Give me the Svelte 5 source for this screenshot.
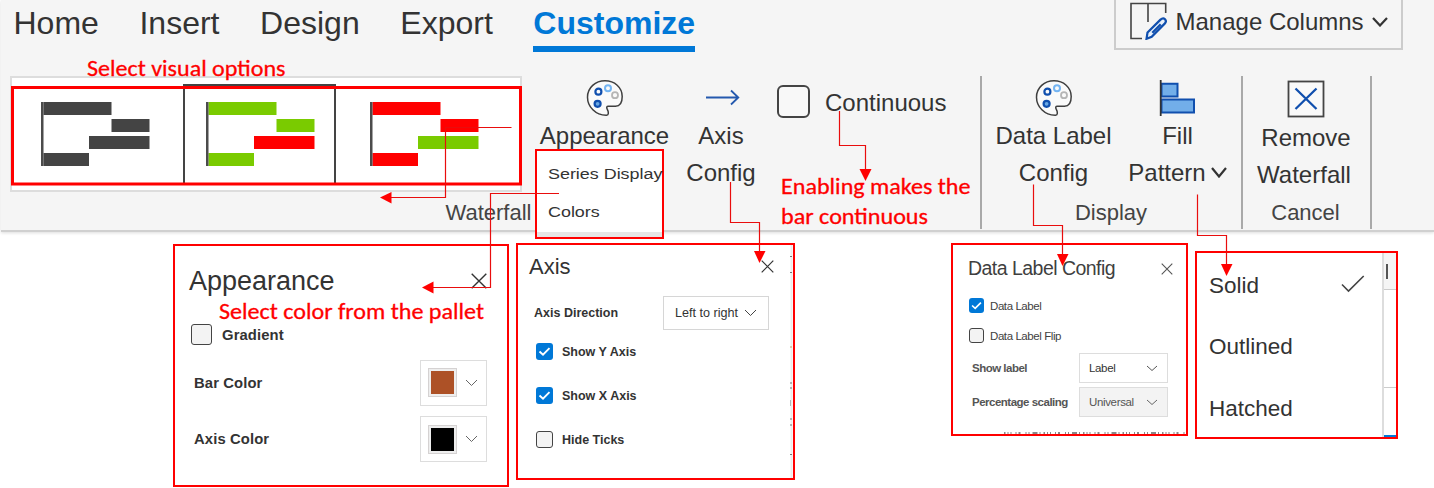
<script>
  const tabs = ['Home', 'Insert', 'Design', 'Export', 'Customize'];
  const G = '#7acb00', R = '#ff0000', K = '#444444';
  const tiles = [
    [K, K, K, K],
    [G, G, R, G],
    [R, R, G, R]
  ];
  const bars = [
    [2.5, 0, 68],
    [70.5, 17, 38],
    [48, 34, 60.5],
    [2.5, 51, 45.5]
  ];
  const connectors = [
    { line: 'M511.5 127.5H445.5V197.5H390', head: '380,197.5 391.5,192 391.5,203.5' },
    { line: 'M559 193.5H490.5V287.5H432', head: '422,287.5 433.5,281.5 433.5,293.5' },
    { line: 'M730.5 182V222.5H759.5V253', head: '759.5,263 754,251 765.5,251' },
    { line: 'M839.5 111V145.5H865.5V171', head: '865.5,181 859.5,169 871.5,169' },
    { line: 'M1033.5 184.5V225.5H1062.5V256', head: '1062.5,266 1057,254 1068.5,254' },
    { line: 'M1197.5 194.5V235.5H1226.5V266', head: '1226.5,276 1221,264 1232.5,264' }
  ];
</script>

{#snippet palette()}
  <svg class="ico" width="38" height="38" viewBox="0 0 38 38" fill="none">
    <path d="M20.5 36.2C9.500 36.400 1.500 27.500 1.500 18.200C1.500 8.500 9.500 1.800 19 1.800S36.200 8.300 36.200 17.500C36.200 23.500 34 27.200 29.500 27.200H22.300C20.700 27.200 20.300 28.600 21.200 30.200C22.800 33 22.900 36.100 20.500 36.200Z" fill="#fafafa" stroke="#3f3f3f" stroke-width="1.5"/>
    <circle cx="12.400" cy="12.700" r="3" stroke="#104fae" stroke-width="2.200"/>
    <circle cx="22" cy="9.200" r="3" stroke="#75b5f2" stroke-width="2"/>
    <circle cx="29" cy="16.200" r="3" stroke="#b5b5b5" stroke-width="1.800"/>
    <circle cx="11.600" cy="24.800" r="3" fill="#69a8e4" stroke="#104fae" stroke-width="2.200"/>
  </svg>
{/snippet}

{#snippet chevron(w, h, s, c)}
  <svg class="chev" width={w} height={h} viewBox="0 0 {w} {h}" fill="none" stroke={c} stroke-width={s}>
    <path d="M1 1L{w / 2} {h - 1.5}L{w - 1} 1"/>
  </svg>
{/snippet}

{#snippet cross(n, s, c)}
  <svg class="cross" width={n} height={n} viewBox="0 0 {n} {n}" stroke={c} stroke-width={s}>
    <path d="M.7 .7L{n - 0.7} {n - 0.7}M{n - 0.7} .7L.7 {n - 0.7}"/>
  </svg>
{/snippet}

{#snippet check(on, n)}
  <span class="check" class:on style:width="{n}px" style:height="{n}px">
    {#if on}
      <svg width={n} height={n} viewBox="0 0 17 17" fill="none" stroke="#fff" stroke-width="1.900"><path d="M3.500 8.500L7 11.700L13.500 5.200"/></svg>
    {/if}
  </span>
{/snippet}

<div class="page">
  <section class="ribbon">
    <header>
      <nav>
        {#each tabs as t}
          <span class="tab" class:active={t === 'Customize'}>{t}</span>
        {/each}
      </nav>
      <div class="manage">
        <svg width="38" height="38" viewBox="0 0 38 38" fill="none" stroke="#444" stroke-width="1.600">
          <path d="M13 36.500H2V1.500H36.700V11M19 1.500V20"/>
          <path d="M17.500 36.800L18.500 30.500L31.500 17.600C33 16.200 35 16.200 36 17.200C37.200 18.600 37 20.300 35.700 21.600L22.700 34.700L17.500 36.800ZM23.300 30.700L31.700 22.300" fill="#e8f1fb" stroke="#104fae" stroke-width="2.200"/>
        </svg>
        <span>Manage Columns</span>
        {@render chevron(16, 10, 2.2, '#333')}
      </div>
    </header>

    <div class="groups">
      <div class="group main">
        <div class="commands">
          <div class="gallery">
            {#each tiles as t, i}
              <div class="tile" class:selected={i === 1}>
                <svg width="109" height="64" viewBox="0 0 109 64">
                  {#each bars as b, j}
                    <rect x={b[0]} y={b[1]} width={b[2]} height="13" fill={t[j]}/>
                  {/each}
                  <rect width="2.500" height="64" fill="#4c4c4c"/>
                </svg>
              </div>
            {/each}
          </div>
          <div class="cmd appearance">
            {@render palette()}
            <span>Appearance</span>
            <div class="menu"><span>Series Display</span><span>Colors</span></div>
          </div>
          <div class="cmd axis">
            <svg class="ico" width="38" height="38" viewBox="0 0 38 38" fill="none" stroke="#2459ae" stroke-width="1.800">
              <path d="M4 18.500H36M29 11.500L36.300 18.500L29 25.500"/>
            </svg>
            <span>Axis</span><span>Config</span>
          </div>
          <div class="continuous"><i></i><span>Continuous</span></div>
        </div>
        <div class="glabel">Waterfall</div>
      </div>
      <div class="divider"></div>
      <div class="group display">
        <div class="commands">
          <div class="cmd data">
            {@render palette()}
            <span>Data Label</span><span>Config</span>
          </div>
          <div class="cmd fill">
            <svg class="ico" width="38" height="38" viewBox="0 0 38 38" fill="#72aee9" stroke="#104fae" stroke-width="2">
              <path d="M2.500 4.800H18.500V17.500H2.500ZM2.500 20.500H35V33.500H2.500Z"/>
              <path d="M1.700 1V37" stroke="#333" stroke-width="1.800"/>
            </svg>
            <span>Fill</span>
            <span class="with">Pattern{@render chevron(16, 11, 2.2, '#333')}</span>
          </div>
        </div>
        <div class="glabel">Display</div>
      </div>
      <div class="divider"></div>
      <div class="group cancel">
        <div class="commands">
          <div class="cmd">
            <svg class="ico" width="38" height="38" viewBox="0 0 38 38" fill="none">
              <rect x="1.500" y="1.500" width="35" height="35" fill="#f9f9f9" stroke="#444" stroke-width="1.800"/>
              <path d="M8.500 8.500L29.500 29M29.500 8.500L8.500 29" stroke="#104fae" stroke-width="2.300"/>
            </svg>
            <span>Remove</span><span class="wf">Waterfall</span>
          </div>
        </div>
        <div class="glabel">Cancel</div>
      </div>
      <div class="divider"></div>
    </div>
  </section>

  <main>
    <section class="panel p1">
      <div class="title"><h2>Appearance</h2>{@render cross(16, 1.4, '#333')}</div>
      <label class="grad">{@render check(false, 21)}<b>Gradient</b></label>
      {#each [['Bar Color', '#ad5126'], ['Axis Color', '#000000']] as c}
        <div class="color-row">
          <b>{c[0]}</b>
          <div class="picker"><i style:background={c[1]}></i>{@render chevron(13, 8, 1, '#666')}</div>
        </div>
      {/each}
    </section>

    <section class="panel p2">
      <div class="body">
        <div class="title"><h2>Axis</h2>{@render cross(13, 1.2, '#333')}</div>
        <div class="direction">
          <b>Axis Direction</b>
          <div class="select">Left to right{@render chevron(13, 8, 1, '#444')}</div>
        </div>
        <label>{@render check(true, 17)}<b>Show Y Axis</b></label>
        <label>{@render check(true, 17)}<b>Show X Axis</b></label>
        <label>{@render check(false, 17)}<b>Hide Ticks</b></label>
      </div>
      <svg class="edge" width="3" height="233" viewBox="0 0 3 233">
        <path d="M1.500 0V233" stroke="#ececec" stroke-width="2"/>
        <path d="M0 11.500H2M0 27.500H2M0 138H2M0 143H2M0 155V161M0 174H2M0 180H2M0 209.500H2" stroke="#777"/>
        <path d="M0 102H2" stroke="#c7a660"/>
      </svg>
    </section>

    <section class="panel p3">
      <div class="title"><h2>Data Label Config</h2>{@render cross(12, 1.1, '#555')}</div>
      <label>{@render check(true, 15)}<span>Data Label</span></label>
      <label>{@render check(false, 15)}<span>Data Label Flip</span></label>
      <div class="opt"><b>Show label</b><div class="select">Label{@render chevron(12, 7, 1, '#555')}</div></div>
      <div class="opt"><b>Percentage scaling</b><div class="select dim">Universal{@render chevron(12, 7, 1, '#666')}</div></div>
      <svg class="cut" width="184" height="3" viewBox="0 0 184 3">
        <path d="M0 2H184" stroke="#888" stroke-width="2" stroke-dasharray="1.500 2 1 2 1 4 1 2 2 5 1 2 1 3 5 2 1 3"/>
      </svg>
    </section>

    <section class="panel p4">
      <ul>
        <li>Solid
          <svg width="24" height="18" viewBox="0 0 24 18" fill="none" stroke="#444" stroke-width="1.600"><path d="M1 9.500L7.500 16L22.700 1"/></svg>
        </li>
        <li>Outlined</li>
        <li>Hatched</li>
      </ul>
      <div class="behind"><i></i><i></i><i></i></div>
    </section>
  </main>

  <svg class="notes" width="1434" height="488" viewBox="0 0 1434 488">
    <rect x="12.500" y="87.500" width="508" height="96.500" fill="none" stroke="#f00" stroke-width="3"/>
    {#each connectors as c}
      <path d={c.line} fill="none" stroke="#e90d0d" stroke-width="1.200"/>
      <polygon points={c.head} fill="#f00"/>
    {/each}
    <g class="note">
      <text x="87" y="75.500" textLength="198.500" lengthAdjust="spacingAndGlyphs">Select visual options</text>
      <text x="781" y="194.300" textLength="189.500" lengthAdjust="spacingAndGlyphs">Enabling makes the</text>
      <text x="781" y="223.800" textLength="147" lengthAdjust="spacingAndGlyphs">bar continuous</text>
      <text x="219" y="318.800" textLength="265" lengthAdjust="spacingAndGlyphs">Select color from the pallet</text>
    </g>
  </svg>
</div>

<style>
  :global(body) { background: #fff; }
  .page { position: relative; width: 1434px; height: 488px; overflow: hidden; color: #333; font-family: "Liberation Sans", Arial, sans-serif; white-space: nowrap; }
  .page :global(*) { box-sizing: border-box; }
  svg { display: block; flex: none; }
  .ribbon { margin-left: 1px; height: 232px; background: #f5f5f5; border-bottom: 2px solid #d0d0d0; box-shadow: 0 1px 3px #ddd; }
  header { display: flex; justify-content: space-between; height: 52px; padding: 0 31px 0 12.500px; }
  nav { display: flex; gap: 40.600px; }
  .tab { height: 52px; font-size: 32px; line-height: 46px; }
  .tab.active { color: #0078d7; font-weight: bold; border-bottom: 6px solid #0078d7; }
  .manage { display: flex; align-items: center; width: 289px; height: 50px; padding: 0 0 6px 12.500px; border: 2px solid #ccc; border-top: 0; font-size: 24px; }
  .manage span { margin: 2px 8px 0 9px; }
  .manage .chev, .manage :global(.chev) { margin-top: 2px; }
  .groups { display: flex; height: 178px; }
  .divider { width: 2px; height: 153px; margin: 24px 0 0 -1px; background: #a9a9a9; }
  .group { display: flex; flex-direction: column; }
  .main { width: 980px; }
  .display { width: 260px; }
  .cancel { width: 128px; }
  .commands { display: flex; height: 147px; }
  .glabel { font-size: 22px; line-height: 28px; text-align: center; color: #444; }
  .main .glabel { padding-right: 5px; }
  .display .glabel { padding-right: 2px; }
  .cancel .glabel { padding-right: 3px; }
  .gallery { display: flex; width: 512px; height: 116px; margin: 24px 0 0 9px; padding: 6px 0 0; background: #fff; border: 2px solid #ddd; }
  .tile { display: flex; padding: 17.500px 0 0 28.500px; width: 171px; height: 101px; }
  .tile.selected { width: 153px; padding: 15.500px 0 0 20.500px; border: 2px solid #444; border-bottom: 0; }
  .tile:last-child { padding-left: 34px; }
  .cmd { display: flex; flex-direction: column; align-items: center; position: relative; padding-top: 27px; font-size: 24px; }
  .cmd > span { line-height: 37px; }
  .cmd .chev { display: block; }
  .appearance { width: 130px; margin-left: 17.500px; }
  .axis { width: 72px; margin-left: 15.500px; }
  .data { width: 116px; margin-left: 13.500px; }
  .fill { width: 98px; margin-left: 17px; }
  .with { display: flex; align-items: center; gap: 5px; }
  .cancel .cmd { width: 127px; padding: 28px 1px 0 0; }
  .cancel .cmd > .ico { margin-bottom: 1px; }
  .wf { margin-right: 4px; }
  .continuous { display: flex; gap: 15px; margin: 32px 0 0 20px; font-size: 24px; line-height: 37px; }
  .continuous i { width: 33px; height: 33px; margin-top: 1px; border: 2px solid #444; border-radius: 6px; background: #f8f8f8; }
  .menu { position: absolute; z-index: 2; left: -5px; top: 97px; width: 129px; height: 90px; padding: 4px 0 0 11px; background: #fff; border: 2px solid #f00; display: flex; flex-direction: column; font-size: 15.500px; box-shadow: inset 0 -5px #e6e6e6; }
  .menu span { line-height: 38px; transform: scaleX(1.155); transform-origin: left; }

  main { display: flex; align-items: flex-start; padding: 11px 0 0 173px; position: relative; z-index: 1; }
  .panel { border: 2px solid #f00; overflow: hidden; background: #fff; }
  h2 { margin: 0; font-weight: normal; }
  .title { display: flex; justify-content: space-between; align-items: center; }
  .check { display: block; flex: none; border: 1.500px solid #444; border-radius: 3px; background: #f3f3f3; }
  .check.on { border: 0; background: #0078d7; }
  label { display: flex; align-items: center; }
  .p1 { width: 336px; height: 243px; margin-top: 1px; padding: 16px 20px 0 14px; font-size: 14.800px; letter-spacing: .12px; }
  .p1 h2 { font-size: 27px; line-height: 38px; letter-spacing: 0; }
  .grad { height: 21px; margin: 24px 0 0 2px; gap: 10px; }
  .p1 .color-row { display: flex; justify-content: space-between; align-items: center; height: 46px; margin-bottom: 10.500px; padding-left: 5px; }
  .grad + .color-row { margin-top: 14.500px; }
  .picker { display: flex; align-items: center; width: 67px; height: 46px; padding-left: 7px; gap: 8px; border: 1px solid #ddd; }
  .picker i { width: 29px; height: 29px; border: 3px solid #eee; outline: 1px solid #d5d2d2; outline-offset: -1px; }
  .p2 { display: flex; justify-content: space-between; width: 279px; height: 237px; margin-left: 7px; font-size: 12.500px; }
  .body { width: 256px; padding: 5px 0 0 11px; }
  .p2 h2 { font-size: 22px; line-height: 33px; }
  .direction { display: flex; align-items: center; justify-content: space-between; height: 34px; margin: 13px 5px 0 5px; }
  .p2 .select { width: 106px; height: 34px; padding-left: 11px; gap: 6px; font-size: 12.600px; }
  .select { display: flex; align-items: center; border: 1px solid #d6d6d6; }
  .p2 label { height: 17px; margin: 0 0 27px 7px; gap: 9px; }
  .direction + label { margin-top: 13px !important; }
  .p3 { width: 237px; height: 193px; margin: 0 0 0 156px; padding: 8px 13px 0 15px; font-size: 11.500px; color: #3f3f3f; }
  .p3 h2 { font-size: 19.500px; line-height: 31px; letter-spacing: -.53px; }
  .p3 .title { height: 31px; }
  .p3 label { height: 15px; margin: 15px 0 0 1px; gap: 6px; letter-spacing: -.42px; }
  .p3 .title + label { margin-top: 14px; }
  .opt { display: flex; align-items: center; justify-content: space-between; height: 30px; margin: 4px 5px 0 4px; font-size: 11.500px; letter-spacing: -.5px; color: #555; }
  label + .opt { margin-top: 10px; }
  .p3 .select { width: 89px; height: 30px; padding: 0 9px; justify-content: space-between; border-color: #ddd; color: #333; letter-spacing: -.35px; }
  .p3 .select.dim { background: #f3f3f3; color: #555; }
  .cut { margin: 14px 0 0 36px; }
  .p4 { display: flex; width: 203px; height: 188px; margin: 8px 0 0 7px; }
  ul { list-style: none; margin: 0; padding: 2px 17px 0 12px; width: 187px; border-right: 2px solid #ddd; font-size: 22.500px; }
  li { display: flex; align-items: center; justify-content: space-between; height: 61.500px; }
  li svg { margin-top: -3px; }
  .behind { flex: 1; }
  .behind i { display: block; border-bottom: 1px solid #ccc; }
  .behind i:first-child { height: 37px; padding: 11px 0 0 2px; background: #f5f5f5; }
  .behind i:first-child::before { content: ''; display: block; width: 2px; height: 15px; background: #555; }
  .behind i:nth-child(2) { height: 98px; }
  .behind i:last-child { height: 49px; border-bottom: 2px solid #0078d7; }
  .notes { position: absolute; inset: 0; z-index: 3; pointer-events: none; }
  .note { fill: #f00; stroke: #f00; stroke-width: .3px; font-family: Carlito, Lato, sans-serif; font-size: 21.500px; font-weight: 400; }
</style>
